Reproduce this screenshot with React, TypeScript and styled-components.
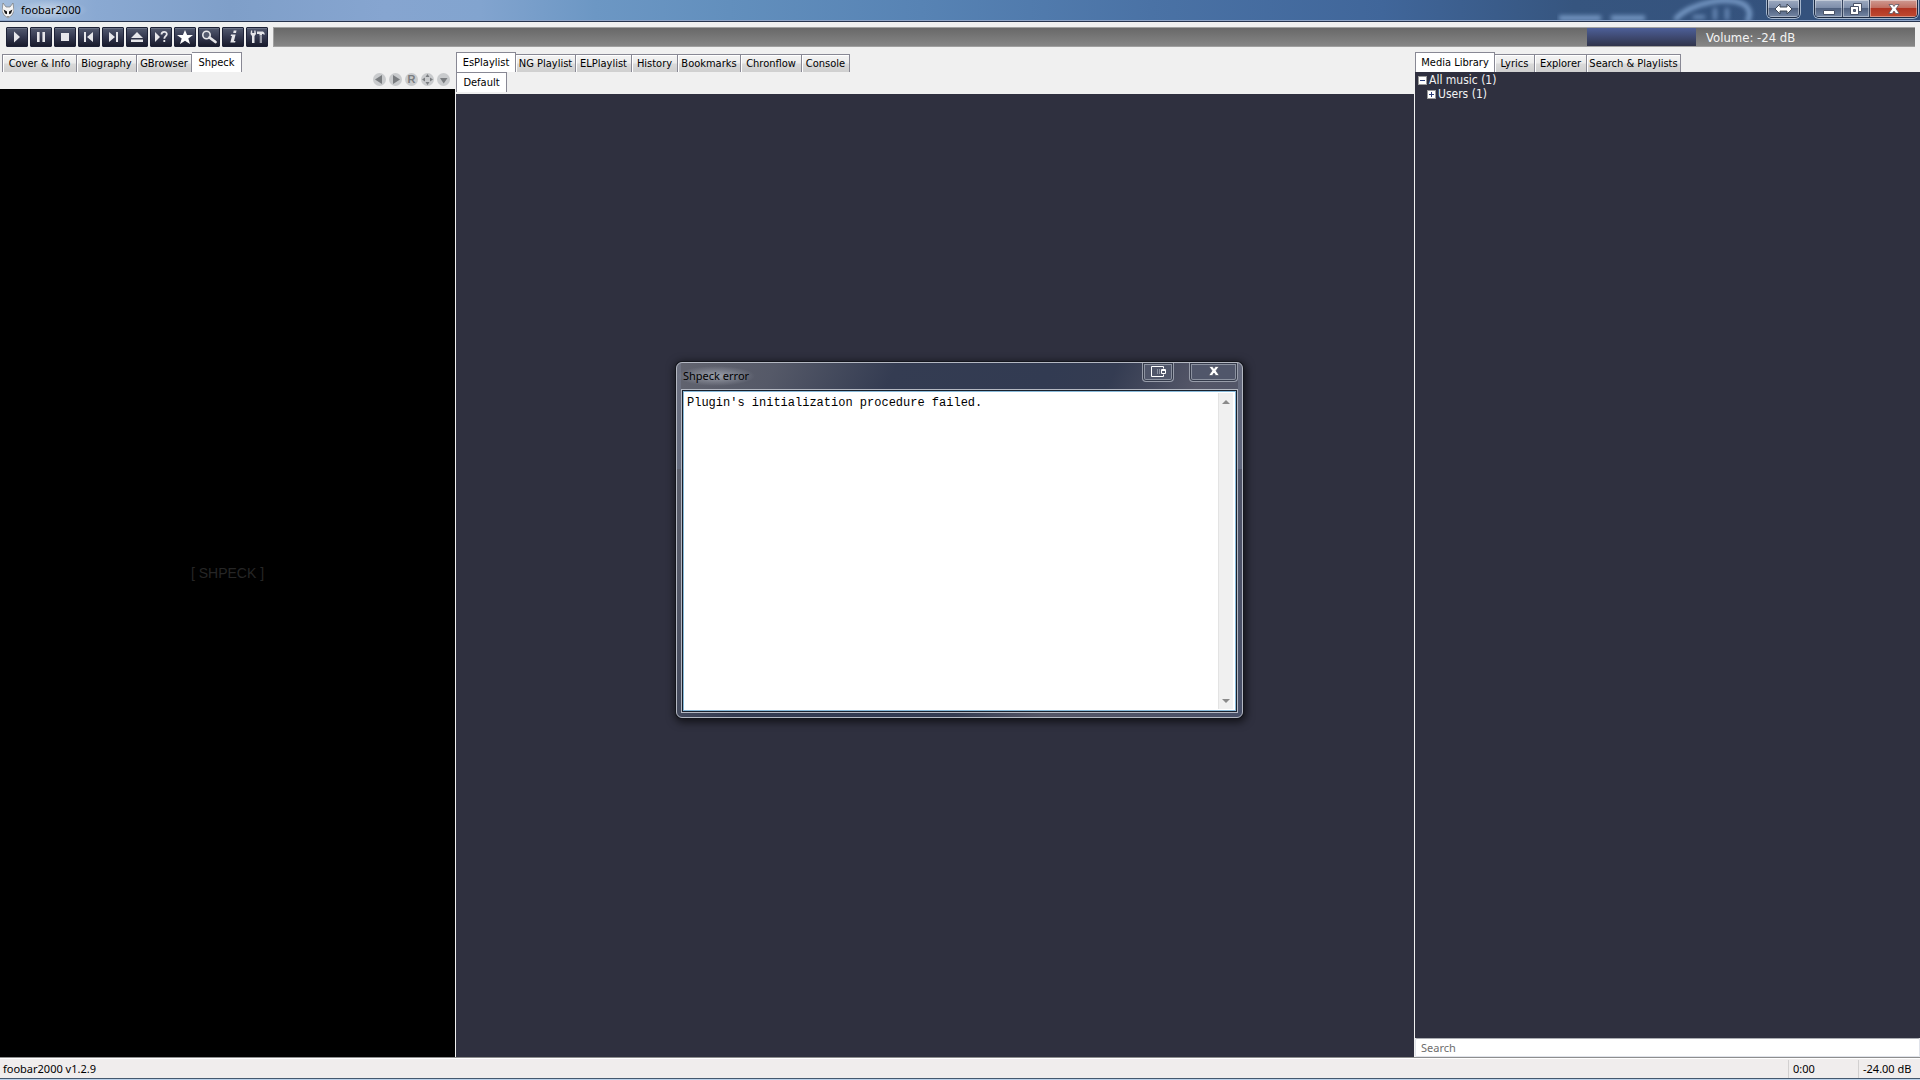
import React from "react";
import styled, { createGlobalStyle, css } from "styled-components";

const uiFont = '"DejaVu Sans Condensed", "DejaVu Sans", sans-serif';
const segoe = '"Noto Sans", "Open Sans", sans-serif';
const navy = "#2f303f";

const Global = createGlobalStyle`
  * { box-sizing: border-box; }
  body { margin: 0; background: #f0f0f0; overflow: hidden; }
  button, input, textarea { font: inherit; color: inherit; margin: 0; padding: 0; border: 0; background: none; }
`;

const Window = styled.div`
  min-height: 100vh;
  display: flex;
  flex-direction: column;
  position: relative;
  font: 11px/14px ${uiFont};
  color: #000;
`;

const TitleBar = styled.header`
  height: 22px;
  display: flex;
  align-items: flex-start;
  overflow: hidden;
  padding: 0 2px 0 2px;
  border-bottom: 1px solid #26334d;
  box-shadow: inset 0 -1px #8fa5c8;
  background: linear-gradient(90deg, #a3bddc 0%, #8aa9d2 5%, #7f9fc9 12%, #86a5d0 20%, #82a4cf 25%, #6c97c4 31%, #628fbd 38%, #5783b4 48%, #4a72a5 60%, #40669a 72%, #36557f 82%, #33507c 100%);
`;

const AppIcon = styled.svg`
  width: 12px;
  height: 17px;
  margin-top: 2px;
`;

const AppTitle = styled.h1`
  margin: 0;
  padding: 0 7px;
  font: 11px/20px ${segoe};
  background: radial-gradient(closest-side, rgba(255, 255, 255, 0.45), rgba(255, 255, 255, 0));
`;

const Spacer = styled.div`
  flex: 1;
`;

const Reflection = styled.svg`
  width: 210px;
  height: 20px;
`;

const CaptionGroup = styled.div`
  display: flex;
  height: 18px;
  margin-left: 14px;
  border: 1px solid #1e2c44;
  border-top: 0;
  border-radius: 0 0 5px 5px;
  overflow: hidden;
  box-shadow: 0 0 0 1px #a4b5cc;
  ${Reflection} + & { margin-left: 0; }
`;

const CaptionButton = styled.button<{ $w: number; $close?: boolean }>`
  width: ${(p) => p.$w}px;
  display: grid;
  place-items: center;
  border-right: 1px solid #34425c;
  box-shadow: inset 0 0 0 1px rgba(255, 255, 255, 0.4);
  background: ${(p) =>
    p.$close
      ? "linear-gradient(#cf9a92 0%, #c17164 44%, #b03523 50%, #c04a30 100%)"
      : "linear-gradient(#9daac0 0%, #7f8fab 44%, #50617f 50%, #7486a5 100%)"};
  &:last-child { border-right: 0; }
`;

const Toolbar = styled.div`
  display: flex;
  padding: 5px 5px 3px 6px;
  height: 30px;
  flex: none;
`;

const ToolButtons = styled.div`
  display: flex;
  gap: 2px;
  margin-right: 5px;
`;

const ToolButton = styled.button`
  width: 22px;
  height: 20px;
  display: grid;
  place-items: center;
  border: 1px solid #1d2136;
  border-radius: 1px;
  box-shadow: inset 0 1px #6a7084;
  background: linear-gradient(#535a70, #34384f 50%, #191b2c);
  color: #e6e6ea;
  svg { display: block; width: 18px; height: 16px; }
`;

const SeekBar = styled.div`
  flex: 1;
  height: 20px;
  border-top: 1px solid #a0a0a0;
  border-left: 1px solid #a0a0a0;
  border-bottom: 1px solid #a0a0a0;
  background: linear-gradient(#686868, #868686);
`;

const VolumeBar = styled(SeekBar)`
  flex: 0 0 328px;
  border-left: 0;
  display: flex;
`;

const VolumeFill = styled.div`
  width: 109px;
  background: linear-gradient(#4d5f98, #30344b);
`;

const VolumeText = styled.output`
  padding-left: 10px;
  font: 13px/19px ${uiFont};
  color: #f4f4f4;
`;

const Panels = styled.main`
  flex: 1;
  display: grid;
  grid-template-columns: 455px minmax(0, 1fr) 505px;
  gap: 1px;
  background: #f0f0f0;
`;

const Panel = styled.section`
  min-width: 0;
  display: flex;
  flex-direction: column;
`;

const Tabs = styled.div<{ $indent?: boolean }>`
  height: 20px;
  display: flex;
  align-items: flex-end;
  padding-left: ${(p) => (p.$indent ? 2 : 0)}px;
`;

const Tab = styled.button<{ $w: number; $active?: boolean }>`
  width: ${(p) => p.$w}px;
  height: 18px;
  white-space: nowrap;
  line-height: 17px;
  border: 1px solid #888894;
  border-width: 1px 1px 0;
  box-shadow: inset 1px 1px #fff;
  background: linear-gradient(#f4f4f4 0%, #ebebeb 48%, #dadada 52%, #cfcfcf 100%);
  & + & { border-left: 0; }
  ${(p) =>
    p.$active &&
    css`
      height: 20px;
      background: #fff;
      && { border-left: 1px solid #888894; }
    `}
`;

const MiniControls = styled.div`
  height: 17px;
  display: flex;
  justify-content: flex-end;
  gap: 3px;
  padding: 1px 5px 0 0;
`;

const MiniButton = styled.button`
  width: 13px;
  height: 13px;
  border-radius: 50%;
  background: #c9cbcd;
  color: #7a7d80;
  font: bold 11px/13px "Liberation Sans", sans-serif;
  svg { display: block; width: 13px; height: 13px; }
`;

const Visualisation = styled.div`
  flex: 1;
  display: grid;
  place-items: center;
  background: #000;
  color: #262626;
  font: 14px/16px "Liberation Sans", sans-serif;
`;

const SubTabs = styled(Tabs)`
  height: 22px;
  align-items: flex-start;
`;

const Playlist = styled.div`
  flex: 1;
  background: ${navy};
`;

const Tree = styled.ul`
  flex: 1;
  margin: 0;
  padding: 1px 3px;
  list-style: none;
  background: ${navy};
  color: #f2f2f2;
  font-size: 12px;
`;

const TreeItem = styled.li<{ $level: number }>`
  display: flex;
  align-items: center;
  gap: 2px;
  height: 14px;
  padding-left: ${(p) => p.$level * 9}px;
`;

const Expander = styled.button`
  width: 9px;
  height: 9px;
  background: #fff;
  border: 1px solid #9a9a9a;
  color: #2a3d78;
  svg { display: block; width: 7px; height: 7px; }
`;

const SearchBox = styled.input`
  flex: none;
  height: 19px;
  padding: 0 5px;
  border: 1px solid #e0e3ea;
  border-top-color: #abadb3;
  border-radius: 2px;
  background: #fff;
  font: 11px/16px ${segoe};
  &::placeholder { color: #6d6d6d; opacity: 1; }
`;

const StatusBar = styled.footer`
  height: 23px;
  display: flex;
  padding: 0 1px 0 0;
  border-top: 1px solid #8e8e8e;
  border-bottom: 1px solid #b9d1ea;
  box-shadow: inset 0 1px #fff, inset 0 -1px #45586e;
  background: #f0eded;
`;

const StatusCell = styled.span<{ $w?: number }>`
  flex: ${(p) => (p.$w ? `0 0 ${p.$w}px` : "1")};
  margin: 2px 0 1px;
  padding-left: ${(p) => (p.$w ? 4 : 3)}px;
  font: 11px/18px ${segoe};
  white-space: nowrap;
  border-left: ${(p) => (p.$w ? "1px solid #d2d0d0" : "0")};
`;

const Dialog = styled.section`
  position: absolute;
  left: calc(50% - 284px);
  top: calc(50% - 178px);
  width: 567px;
  height: 356px;
  display: flex;
  flex-direction: column;
  padding: 0 4px 4px;
  border: 1px solid #b4b8c2;
  border-radius: 6px;
  box-shadow: 0 0 0 1px #14161d, 1px 2px 9px 2px rgba(0, 0, 0, 0.65);
  background:
    linear-gradient(rgba(120, 126, 145, 0.5), rgba(110, 120, 145, 0.5)) 0 0 / 4px 106px no-repeat,
    linear-gradient(rgba(120, 126, 145, 0.5), rgba(110, 120, 145, 0.5)) 100% 0 / 4px 106px no-repeat,
    linear-gradient(115deg, #62646f 0, #555968 90px, #343c52 200px, #323b52 340px, #343c52 400px, #555768 480px, #485068 100%);
`;

const DialogBar = styled.header`
  height: 26px;
  display: flex;
  align-items: flex-start;
`;

const DialogTitle = styled.h2`
  margin: 3px 0 0 -4px;
  padding: 0 6px;
  font: 11px/20px ${segoe};
  background: radial-gradient(closest-side, rgba(190, 195, 205, 0.65), rgba(190, 195, 205, 0));
`;

const DialogButton = styled.button<{ $w: number }>`
  width: ${(p) => p.$w}px;
  height: 19px;
  margin-left: ${(p) => (p.$w > 40 ? 15 : 0)}px;
  padding-bottom: 2px;
  display: grid;
  place-items: center;
  border: 1px solid #989daa;
  border-top: 0;
  border-radius: 0 0 4px 4px;
  box-shadow: inset 0 0 0 1px #343a4a, inset 0 0 0 2px #8c92a0;
  background: #50566a;
`;

const DialogBody = styled.div`
  flex: 1;
  display: flex;
  border: 1px solid #b4b8c2;
  outline: 1px solid #18202c;
  outline-offset: -2px;
  padding: 2px;
  background: #88b9d9;
`;

const Message = styled.textarea`
  flex: 1;
  padding: 4px 3px;
  resize: none;
  outline: 0;
  background: #fff;
  color: #000;
  font: 12px/14px "Liberation Mono", monospace;
  overflow: hidden;
`;

const Scroll = styled.div`
  width: 18px;
  display: flex;
  flex-direction: column;
  justify-content: space-between;
  border: 1px solid #fff;
  border-right-width: 2px;
  background: #f0f0f0;
  box-shadow: inset 1px 0 #e3e3e3;
`;

const ScrollButton = styled.button`
  height: 17px;
  display: grid;
  place-items: center;
  color: #8a8a8a;
`;

const tools: [string, React.ReactNode][] = [
  ["Play", <path d="M6 2.500v11l6-5.500z" />],
  ["Pause", <path d="M5 3h2.600v10H5zM10.400 3H13v10h-2.600z" />],
  ["Stop", <path d="M5 4h8v8H5z" />],
  ["Previous", <path d="M4 3h2v10H4zM13 3v10L7 8z" />],
  ["Next", <path d="M12 3h2v10h-2zM5 3v10l6-5z" />],
  ["Eject", <path d="M9 3l6 6H3zM3 10.500h12V13H3z" />],
  [
    "Random",
    <>
      <path d="M3 3v10l5-5z" />
      <path d="M9.500 5.500C9.500 1.800 15 2 14.800 5.300 14.700 7 12.300 7.500 12.300 9.700M12.300 11v2" fill="none" stroke="currentColor" strokeWidth="1.800" />
    </>,
  ],
  ["Favourite", <path d="M9 1l2.100 5H17l-4.700 3.500L14 15l-5-3.300L4 15l1.700-5.500L1 6h5.900z" fill="#fff" />],
  [
    "Find",
    <>
      <circle cx="6.500" cy="6" r="3.700" fill="#555b70" stroke="currentColor" strokeWidth="1.600" />
      <path d="M9.500 8.500l6 4.500" stroke="currentColor" strokeWidth="2.800" strokeLinecap="round" />
    </>,
  ],
  ["Information", <path d="M9.700 1.500h2.800L12 4H9.200zM7 5.500h4.600L10 12h1.500l-.4 1.500H6.300L8 7H6.700z" />],
  [
    "Preferences",
    <>
      <path d="M3 1.500L2.500 5 4 7v7h2.500V7L8 5 7.500 1.500H6.300V4H4.200V1.500z" />
      <path d="M9 2.500h6l1.500 1.500v2L15 5h-1v1.500h-2.500V5H9z" />
      <path d="M11.700 6.500H14V14h-2.300z" fill="#9a9ca8" />
    </>,
  ],
];

type TabDef = [string, number];
const leftTabs: TabDef[] = [["Cover & Info", 75], ["Biography", 60], ["GBrowser", 55], ["Shpeck", 50]];
const midTabs: TabDef[] = [["EsPlaylist", 60], ["NG Playlist", 60], ["ELPlaylist", 56], ["History", 46], ["Bookmarks", 63], ["Chronflow", 61], ["Console", 48]];
const rightTabs: TabDef[] = [["Media Library", 80], ["Lyrics", 40], ["Explorer", 52], ["Search & Playlists", 94]];

const minis: [string, React.ReactNode][] = [
  ["Previous preset", <svg viewBox="0 0 13 13"><path d="M2 6.500L9 2v9z" fill="currentColor" /></svg>],
  ["Next preset", <svg viewBox="0 0 13 13"><path d="M11 6.500L4 2v9z" fill="currentColor" /></svg>],
  ["Random preset", "R"],
  ["Full screen", <svg viewBox="0 0 13 13"><path d="M6.500 1l2 3h-4zM6.500 12l2-3h-4zM1 6.500l3-2v4zM12 6.500l-3-2v4z" fill="currentColor" /></svg>],
  ["Menu", <svg viewBox="0 0 13 13"><path d="M3 5h7.500l-3.800 5.500z" fill="currentColor" /></svg>],
];

function TabRow({ tabs, active, indent }: { tabs: TabDef[]; active: string; indent?: boolean }) {
  return (
    <Tabs role="tablist" $indent={indent}>
      {tabs.map(([name, w]) => (
        <Tab key={name} role="tab" aria-selected={name === active} $w={w} $active={name === active}>
          {name}
        </Tab>
      ))}
    </Tabs>
  );
}

const CloseGlyph = () => (
  <svg width="12" height="10" viewBox="0 0 12 10">
    <path d="M1 .5h3.500L6 2.500 7.500.5H11L8 4.800 11.300 9.500H7.700L6 7 4.300 9.500H.7L4 4.800z" fill="#fff" stroke="#4a4f5e" strokeWidth=".7" />
  </svg>
);

export default function App() {
  return (
    <Window>
      <Global />
      <TitleBar>
        <AppIcon viewBox="0 0 12 17">
          <path d="M1 1l3 4h4l3-4 1 8-2 4-4 3-4-3-2-4z" fill="#f5f5f5" stroke="#777" strokeWidth=".7" />
          <path d="M1.500 7.500L5 9.500v2.800L3 11.500zM10.500 7.500L7 9.500v2.800l2-.8z" fill="#151515" />
          <path d="M5 14h2l-1 1z" fill="#333" />
        </AppIcon>
        <AppTitle>foobar2000</AppTitle>
        <Spacer />
        <Reflection viewBox="0 0 210 20" aria-hidden="true">
          <defs>
            <filter id="soft"><feGaussianBlur stdDeviation="2" /></filter>
          </defs>
          <g filter="url(#soft)" fill="none" stroke="#88acd8" opacity=".8">
            <path d="M2 18h42M54 18h34" strokeWidth="5" />
            <path d="M118 20C132 2 178-6 190 7c4 5 3 10 0 15" strokeWidth="5" />
            <path d="M136 17h12M158 8v12M170 8v12" strokeWidth="3" />
          </g>
        </Reflection>
        <CaptionGroup>
          <CaptionButton $w={31} aria-label="Move to other display">
            <svg width="19" height="12" viewBox="0 0 19 12">
              <path d="M1 6l5-5v3h7V1l5 5-5 5V8H6v3z" fill="#fff" stroke="#3d4655" />
            </svg>
          </CaptionButton>
        </CaptionGroup>
        <CaptionGroup>
          <CaptionButton $w={28} aria-label="Minimize">
            <svg width="12" height="12" viewBox="0 0 12 12"><path d="M.5 7.500h11v4H.5z" fill="#fff" stroke="#4a5368" /></svg>
          </CaptionButton>
          <CaptionButton $w={27} aria-label="Restore">
            <svg width="12" height="12" viewBox="0 0 12 12" fill="#fff" stroke="#4a5368">
              <path d="M3.500.5h8v8h-8z" />
              <path d="M.5 3.500h8v8h-8z" />
              <path d="M3.500 6.500h2v2h-2z" fill="#5e6c88" />
            </svg>
          </CaptionButton>
          <CaptionButton $w={47} $close aria-label="Close"><CloseGlyph /></CaptionButton>
        </CaptionGroup>
      </TitleBar>

      <Toolbar>
        <ToolButtons>
          {tools.map(([name, icon]) => (
            <ToolButton key={name} aria-label={name}>
              <svg viewBox="0 0 18 16" fill="currentColor">{icon}</svg>
            </ToolButton>
          ))}
        </ToolButtons>
        <SeekBar />
        <VolumeBar>
          <VolumeFill />
          <VolumeText>Volume: -24 dB</VolumeText>
        </VolumeBar>
      </Toolbar>

      <Panels>
        <Panel>
          <TabRow tabs={leftTabs} active="Shpeck" indent />
          <MiniControls>
            {minis.map(([name, icon]) => (
              <MiniButton key={name} aria-label={name}>{icon}</MiniButton>
            ))}
          </MiniControls>
          <Visualisation>[ SHPECK ]</Visualisation>
        </Panel>
        <Panel>
          <TabRow tabs={midTabs} active="EsPlaylist" />
          <SubTabs role="tablist">
            <Tab role="tab" aria-selected $w={51} $active>Default</Tab>
          </SubTabs>
          <Playlist />
        </Panel>
        <Panel>
          <TabRow tabs={rightTabs} active="Media Library" />
          <Tree>
            <TreeItem $level={0}>
              <Expander aria-label="Collapse"><svg viewBox="0 0 7 7"><path d="M1 3h5v1H1z" fill="currentColor" /></svg></Expander>
              All music (1)
            </TreeItem>
            <TreeItem $level={1}>
              <Expander aria-label="Expand"><svg viewBox="0 0 7 7"><path d="M1 3h2V1h1v2h2v1H4v2H3V4H1z" fill="currentColor" /></svg></Expander>
              Users (1)
            </TreeItem>
          </Tree>
          <SearchBox type="text" placeholder="Search" aria-label="Search" />
        </Panel>
      </Panels>

      <StatusBar>
        <StatusCell>foobar2000 v1.2.9</StatusCell>
        <StatusCell $w={70}>0:00</StatusCell>
        <StatusCell $w={61}>-24.00 dB</StatusCell>
      </StatusBar>

      <Dialog role="dialog" aria-labelledby="dialog-title">
        <DialogBar>
          <DialogTitle id="dialog-title">Shpeck error</DialogTitle>
          <Spacer />
          <DialogButton $w={32} aria-label="Move to other display">
            <svg width="15" height="11" viewBox="0 0 15 11" fill="none" stroke="#fff">
              <path d="M12.500 2.500v-2H.5v10h12v-2" />
              <path d="M6.500 3v5M8.500 3v5" stroke="#8d93a2" />
              <path d="M10.500 3.500h4v4h-4zM10 4.500h5" />
            </svg>
          </DialogButton>
          <DialogButton $w={49} aria-label="Close"><CloseGlyph /></DialogButton>
        </DialogBar>
        <DialogBody>
          <Message readOnly aria-label="Error message" defaultValue="Plugin's initialization procedure failed." />
          <Scroll>
            <ScrollButton aria-label="Scroll up"><svg width="8" height="4" viewBox="0 0 8 4"><path d="M4 0l4 4H0z" fill="currentColor" /></svg></ScrollButton>
            <ScrollButton aria-label="Scroll down"><svg width="8" height="4" viewBox="0 0 8 4"><path d="M4 4l4-4H0z" fill="currentColor" /></svg></ScrollButton>
          </Scroll>
        </DialogBody>
      </Dialog>
    </Window>
  );
}
